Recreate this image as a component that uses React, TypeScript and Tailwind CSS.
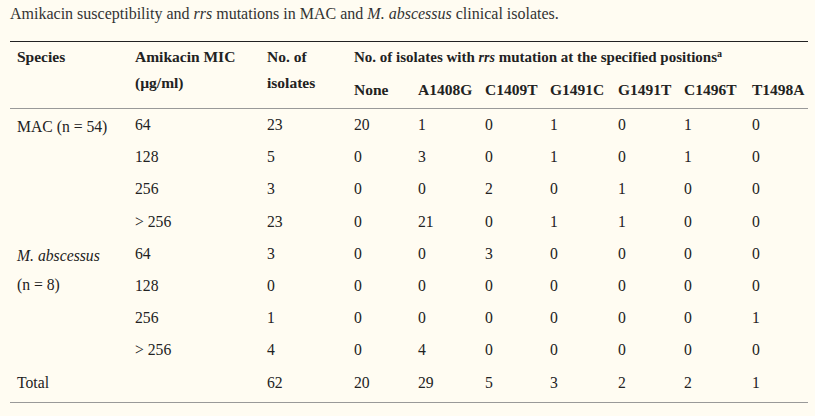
import React from 'react';

const serif = "font-['Liberation_Serif','Times_New_Roman',serif]";

const mutations = ['A1408G', 'C1409T', 'G1491C', 'G1491T', 'C1496T', 'T1498A'];

type Row = { mic: string; n: string; counts: string[] };

const mac: Row[] = [
  { mic: '64', n: '23', counts: ['20', '1', '0', '1', '0', '1', '0'] },
  { mic: '128', n: '5', counts: ['0', '3', '0', '1', '0', '1', '0'] },
  { mic: '256', n: '3', counts: ['0', '0', '2', '0', '1', '0', '0'] },
  { mic: '> 256', n: '23', counts: ['0', '21', '0', '1', '1', '0', '0'] },
];

const abscessus: Row[] = [
  { mic: '64', n: '3', counts: ['0', '0', '3', '0', '0', '0', '0'] },
  { mic: '128', n: '0', counts: ['0', '0', '0', '0', '0', '0', '0'] },
  { mic: '256', n: '1', counts: ['0', '0', '0', '0', '0', '0', '1'] },
  { mic: '> 256', n: '4', counts: ['0', '4', '0', '0', '0', '0', '0'] },
];

const total = ['62', '20', '29', '5', '3', '2', '2', '1'];

const td = 'pl-[7px] pt-[3px] pb-[3.2px] leading-[26px] text-left align-top';
const th = 'pl-[7px] text-left align-top font-bold leading-[26px] text-[15.5px]';

function DataRows({ rows, label }: { rows: Row[]; label: React.ReactNode }) {
  return (
    <>
      {rows.map((r, i) => (
        <tr key={i}>
          {i === 0 && (
            <td rowSpan={rows.length} className="pl-[7px] pt-[3px] leading-[29px] text-left align-top">
              {label}
            </td>
          )}
          <td className={td}>{r.mic}</td>
          <td className={td}>{r.n}</td>
          {r.counts.map((c, j) => (
            <td key={j} className={td}>
              {c}
            </td>
          ))}
        </tr>
      ))}
    </>
  );
}

export default function App() {
  return (
    <div className={`min-h-screen w-[815px] h-[416px] bg-[#fffcf2] text-[#222] ${serif} text-[15.7px] overflow-hidden`}>
      <p className="pl-[10px] pt-[3px] leading-[22px] text-[16px] text-[#333]">
        Amikacin susceptibility and <i>rrs</i> mutations in MAC and <i>M. abscessus</i> clinical isolates.
      </p>
      <table className="ml-[10px] mt-[16px] w-[798px] table-fixed border-collapse">
        <colgroup>
          <col className="w-[118px]" />
          <col className="w-[132px]" />
          <col className="w-[87px]" />
          <col className="w-[64px]" />
          <col className="w-[67px]" />
          <col className="w-[65px]" />
          <col className="w-[68px]" />
          <col className="w-[66px]" />
          <col className="w-[68px]" />
          <col className="w-[63px]" />
        </colgroup>
        <thead>
          <tr className="border-t border-[#222]">
            <th rowSpan={2} className={`${th} pt-[2px]`}>Species</th>
            <th rowSpan={2} className={`${th} pt-[2px]`}>
              Amikacin MIC
              <br />
              (µg/ml)
            </th>
            <th rowSpan={2} className={`${th} pt-[2px]`}>
              No. of
              <br />
              isolates
            </th>
            <th colSpan={7} className={`${th} !text-[15px] pt-[2px] pb-[4px] whitespace-nowrap`}>
              No. of isolates with <i className="font-bold text-[14px]">rrs</i> mutation at the specified positions
              <sup className="text-[10px]">a</sup>
            </th>
          </tr>
          <tr className="border-b border-[#999]">
            <th className={`${th} pt-[2px] pb-[5px]`}>None</th>
            {mutations.map((m) => (
              <th key={m} className={`${th} pt-[2px] pb-[5px]`}>
                {m}
              </th>
            ))}
          </tr>
        </thead>
        <tbody>
          <DataRows rows={mac} label="MAC (n = 54)" />
          <DataRows
            rows={abscessus}
            label={
              <>
                <i>M. abscessus</i>
                <br />
                (n = 8)
              </>
            }
          />
          <tr className="border-b border-[#999]">
            <td className="pl-[7px] pt-[3px] pb-[6px] leading-[26px] text-left align-top">Total</td>
            <td className="pl-[7px] pt-[3px] pb-[6px] leading-[26px]" />
            {total.map((t, i) => (
              <td key={i} className="pl-[7px] pt-[3px] pb-[6px] leading-[26px] text-left align-top">
                {t}
              </td>
            ))}
          </tr>
        </tbody>
      </table>
    </div>
  );
}
